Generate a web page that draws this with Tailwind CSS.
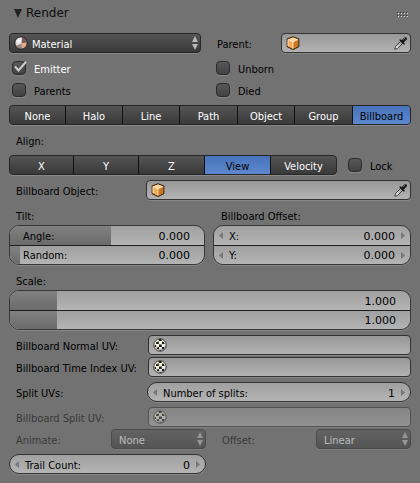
<!DOCTYPE html>
<html lang="en">
<head>
<meta charset="utf-8">
<meta name="viewport" content="width=device-width, initial-scale=1">
<title>Render</title>
<script src="https://cdn.jsdelivr.net/npm/@tailwindcss/browser@4"></script>
</head>
<body class="min-h-screen bg-[#727272] text-black text-[11px] leading-5 font-['DejaVu_Sans_Condensed','DejaVu_Sans',sans-serif]">
<svg class="block h-0 w-0" aria-hidden="true">
  <defs>
    <radialGradient id="ball" cx="35%" cy="30%" r="75%"><stop offset="0" stop-color="#fff"/><stop offset=".55" stop-color="#d0d0d0"/><stop offset="1" stop-color="#777"/></radialGradient>
    <linearGradient id="glass" x1="0" y1="1" x2="1" y2="0"><stop offset="0" stop-color="#fff"/><stop offset="1" stop-color="#888"/></linearGradient>
    <linearGradient id="ivory" x1="0" y1="0" x2="1" y2="1"><stop offset="0" stop-color="#fffbd0"/><stop offset=".6" stop-color="#f4f1e0"/><stop offset="1" stop-color="#a9c4f5"/></linearGradient>
  </defs>
  <symbol id="cube" viewBox="0 0 14 14">
    <path d="M7 .8 12.8 3v7.6L7 13.4 1.2 10.6V3Z" fill="#f0a14c" stroke="#3a2208" stroke-width="1.1" stroke-linejoin="round"/>
    <path d="M7 1.5 12 3.4 7 5.8 2 3.4Z" fill="#ffd9a4"/>
    <path d="M7 5.8 12.1 3.5v6.7L7 12.7Z" fill="#c87820"/>
    <path d="M1.9 3.5 7 5.8v6.9l-5.1-2.5Z" fill="#f5aa58"/>
    <path d="M2 10V3.6L7 5.8l5-2.3M7 5.8v6.6" fill="none" stroke="#ffe9cc" stroke-width=".9"/>
  </symbol>
  <symbol id="dropper" viewBox="0 0 14 14">
    <path d="M.8 13.2 1.6 10.4 7 5l2 2-5.4 5.4Z" fill="url(#glass)" stroke="#1c1c1c" stroke-width=".8" stroke-linejoin="round"/>
    <path d="M6.2 4 10 7.8" stroke="#111" stroke-width="1.6" stroke-linecap="round"/>
    <path d="M8.6 5.4 11.4 2.6" stroke="#1a1a1a" stroke-width="3.2" stroke-linecap="round"/>
    <path d="M9.6 3.2 11 1.9" stroke="#888" stroke-width="1" stroke-linecap="round"/>
  </symbol>
  <symbol id="uv" viewBox="0 0 14 14">
    <circle cx="7" cy="7" r="6.2" fill="url(#ivory)"/>
    <path d="M5.8 1h2.6l.4 2H5.8ZM3.2 4l2.6-.6.1 2.7H3ZM9 3.6l2 .4.6 2H9ZM6 6.4h2.8V9H6ZM1.6 7h1.4l.2 2H2ZM3.4 9.4 6 9l.2 2.4-2-.2ZM9 9h2.6l-1 2.2-1.8.2ZM6.4 11.8h2l-.4 1H6.6Z" fill="#1c1c1c"/>
    <circle cx="7" cy="7" r="6.2" fill="none" stroke="#222" stroke-width=".9"/>
  </symbol>
  <symbol id="updown" viewBox="0 0 6 14">
    <path d="M3 0 6 6H0ZM0 8h6L3 14Z" fill="#b8b8b8"/>
  </symbol>
</svg>

<main class="px-[9px] pb-[9px]">
  <header class="flex h-[33px] items-start justify-between pt-[3px] pl-[5px] pr-[3px]">
    <button type="button" aria-expanded="true" class="flex items-center gap-1 text-xs leading-5 text-[#0c0c0c]">
      <svg class="h-[9px] w-2" viewBox="0 0 8 9" aria-hidden="true"><path d="M0 0h8L4 9Z" fill="#222"/></svg>
      <h2 class="font-['DejaVu_Sans',sans-serif]">Render</h2>
    </button>
    <svg class="mt-[9px] h-[5px] w-[11px]" viewBox="0 0 11 5" shape-rendering="crispEdges" aria-hidden="true">
      <path d="M1 1h1v1H1zM4 1h1v1H4zM7 1h1v1H7zM10 1h1v1h-1zM1 4h1v1H1zM4 4h1v1H4zM7 4h1v1H7zM10 4h1v1h-1z" fill="#dcdcdc"/>
      <path d="M0 0h1v1H0zM3 0h1v1H3zM6 0h1v1H6zM9 0h1v1H9zM0 3h1v1H0zM3 3h1v1H3zM6 3h1v1H6zM9 3h1v1H9z" fill="#333"/>
    </svg>
  </header>

  <form class="flex flex-col gap-[5px]">
    <div class="grid grid-cols-[192fr_80fr_130fr]">
      <div class="relative">
        <select aria-label="Render as material" class="block h-5 w-full appearance-none rounded border border-[#262626] bg-linear-to-b from-[#555] to-[#393939] pt-px pl-[22px] text-white shadow-[0_1px_0_#888]"><option>Material</option></select>
        <svg class="pointer-events-none absolute top-[3px] left-[5px] size-3.5" viewBox="0 0 14 14" aria-hidden="true">
          <circle cx="7" cy="7" r="6" fill="url(#ball)"/>
          <path d="M8 1a6 6 0 0 1 5 5.5L7.5 7.5Z" fill="#77605c"/>
          <path d="M7.5 7.5 13 6.5a6 6 0 0 1-5 6.5Z" fill="#eba888"/>
          <path d="M7.5 7.5 8 13a6 6 0 0 1-6.2-3Z" fill="#9a8884"/>
          <circle cx="7" cy="7" r="6.2" fill="none" stroke="#1a1a1a" stroke-width=".8"/>
        </svg>
        <svg class="pointer-events-none absolute top-[3px] right-[3px] h-3.5 w-1.5" aria-hidden="true"><use href="#updown"/></svg>
      </div>
      <label for="parent" class="h-5 pt-0.5 pl-4">Parent:</label>
      <div class="flex h-5 items-center rounded border border-[#333] bg-linear-to-b from-[#989898] to-[#b3b3b3] pl-1 pr-0.5 shadow-[0_1px_0_#888]">
        <svg class="size-3.5 shrink-0" aria-hidden="true"><use href="#cube"/></svg>
        <input id="parent" type="text" class="h-full w-0 min-w-0 grow bg-transparent px-1 outline-none">
        <button type="button" aria-label="Pick parent"><svg class="size-3.5" aria-hidden="true"><use href="#dropper"/></svg></button>
      </div>
    </div>

    <div class="grid grid-cols-[196fr_198fr] gap-x-2 gap-y-0.5">
      <label class="flex h-5 items-center gap-2 pl-[3px] text-white"><span class="relative flex"><input type="checkbox" checked class="size-3.5 appearance-none rounded border border-[#2c2c2c] bg-linear-to-b from-[#585858] to-[#424242] shadow-[0_1px_0_#888]"><svg class="pointer-events-none absolute top-0 left-[2px] h-3 w-[13px]" viewBox="0 0 13 12" aria-hidden="true"><path d="M1 5.5 4.5 9.5 12 .8" fill="none" stroke="#d0d0d0" stroke-width="2"/></svg></span><span class="pt-1">Emitter</span></label>
      <label class="flex h-5 items-center gap-2 pl-[3px]"><input type="checkbox" class="size-3.5 appearance-none rounded border border-[#2c2c2c] bg-linear-to-b from-[#585858] to-[#424242] shadow-[0_1px_0_#888]"><span class="pt-1">Unborn</span></label>
      <label class="flex h-5 items-center gap-2 pl-[3px]"><input type="checkbox" class="size-3.5 appearance-none rounded border border-[#2c2c2c] bg-linear-to-b from-[#585858] to-[#424242] shadow-[0_1px_0_#888]"><span class="pt-1">Parents</span></label>
      <label class="flex h-5 items-center gap-2 pl-[3px]"><input type="checkbox" class="size-3.5 appearance-none rounded border border-[#2c2c2c] bg-linear-to-b from-[#585858] to-[#424242] shadow-[0_1px_0_#888]"><span class="pt-1">Died</span></label>
    </div>

    <div role="group" aria-label="Render type" class="grid h-5 grid-cols-[56fr_57fr_57fr_58fr_57fr_58fr_57fr] divide-x divide-[#111] overflow-hidden rounded border border-[#262626] bg-linear-to-b from-[#555] to-[#393939] leading-[22px] text-white shadow-[0_1px_0_#888]">
      <button type="button">None</button>
      <button type="button">Halo</button>
      <button type="button">Line</button>
      <button type="button">Path</button>
      <button type="button">Object</button>
      <button type="button">Group</button>
      <button type="button" aria-pressed="true" class="bg-linear-to-b from-[#4873ba] to-[#628cd2] text-black">Billboard</button>
    </div>

    <p class="h-5 pt-0.5 pl-[7px]">Align:</p>

    <div class="grid grid-cols-[328fr_74fr]">
      <div role="group" aria-label="Align" class="grid h-5 grid-cols-[64fr_65fr_66fr_66fr_65fr] divide-x divide-[#111] overflow-hidden rounded border border-[#262626] bg-linear-to-b from-[#555] to-[#393939] leading-[22px] text-white shadow-[0_1px_0_#888]">
        <button type="button">X</button>
        <button type="button">Y</button>
        <button type="button">Z</button>
        <button type="button" aria-pressed="true" class="bg-linear-to-b from-[#4873ba] to-[#628cd2] text-black">View</button>
        <button type="button">Velocity</button>
      </div>
      <label class="flex h-5 items-center gap-2 pl-[11px]"><input type="checkbox" class="size-3.5 appearance-none rounded border border-[#2c2c2c] bg-linear-to-b from-[#585858] to-[#424242] shadow-[0_1px_0_#888]"><span class="pt-1">Lock</span></label>
    </div>

    <div class="grid grid-cols-[137fr_265fr]">
      <label for="bobject" class="h-5 pt-0.5 pl-[7px]">Billboard Object:</label>
      <div class="flex h-5 items-center rounded border border-[#333] bg-linear-to-b from-[#989898] to-[#b3b3b3] pl-1 pr-0.5 shadow-[0_1px_0_#888]">
        <svg class="size-3.5 shrink-0" aria-hidden="true"><use href="#cube"/></svg>
        <input id="bobject" type="text" class="h-full w-0 min-w-0 grow bg-transparent px-1 outline-none">
        <button type="button" aria-label="Pick billboard object"><svg class="size-3.5" aria-hidden="true"><use href="#dropper"/></svg></button>
      </div>
    </div>

    <div class="grid grid-cols-[196fr_198fr] gap-x-2">
      <section>
        <h3 class="h-5 pt-0.5 pl-[7px]">Tilt:</h3>
        <div class="divide-y divide-[#1e1e1e] overflow-hidden rounded-[10px] border border-[#383838] shadow-[0_1px_0_#888]">
          <div class="relative flex h-5 items-center bg-linear-to-b from-[#a0a0a0] to-[#b4b4b4] pl-[13px] pr-3.5">
            <div class="absolute inset-y-0 left-0 bg-linear-to-b from-[#818181] to-[#6b6b6b]" style="width:52%"></div>
            <label for="angle" class="relative pt-0.5">Angle:</label>
            <input id="angle" type="text" value="0.000" class="relative w-0 min-w-0 grow bg-transparent pt-0.5 text-right font-['DejaVu_Sans',sans-serif] outline-none">
          </div>
          <div class="relative flex h-[18px] items-center bg-linear-to-b from-[#a0a0a0] to-[#b4b4b4] pl-[13px] pr-3.5">
            <div class="absolute inset-y-0 left-0 bg-linear-to-b from-[#818181] to-[#6b6b6b]" style="width:5%"></div>
            <label for="random" class="relative pt-0.5">Random:</label>
            <input id="random" type="text" value="0.000" class="relative w-0 min-w-0 grow bg-transparent pt-0.5 text-right font-['DejaVu_Sans',sans-serif] outline-none">
          </div>
        </div>
      </section>
      <section>
        <h3 class="h-5 pt-0.5 pl-2">Billboard Offset:</h3>
        <div class="divide-y divide-[#1e1e1e] overflow-hidden rounded-[10px] border border-[#383838] shadow-[0_1px_0_#888]">
          <div class="flex h-5 items-center bg-linear-to-b from-[#a0a0a0] to-[#b4b4b4] px-[5px]">
            <button type="button" aria-label="Decrease X"><svg class="h-[7px] w-1" viewBox="0 0 4 7"><path d="M4 0v7L0 3.5Z" fill="#777"/></svg></button>
            <label for="ox" class="pt-0.5 pl-1.5">X:</label>
            <input id="ox" type="text" value="0.000" class="w-0 min-w-0 grow bg-transparent pt-0.5 pr-1.5 text-right font-['DejaVu_Sans',sans-serif] outline-none">
            <button type="button" aria-label="Increase X"><svg class="h-[7px] w-1" viewBox="0 0 4 7"><path d="M0 0v7L4 3.5Z" fill="#777"/></svg></button>
          </div>
          <div class="flex h-[18px] items-center bg-linear-to-b from-[#a0a0a0] to-[#b4b4b4] px-[5px]">
            <button type="button" aria-label="Decrease Y"><svg class="h-[7px] w-1" viewBox="0 0 4 7"><path d="M4 0v7L0 3.5Z" fill="#777"/></svg></button>
            <label for="oy" class="pt-0.5 pl-1.5">Y:</label>
            <input id="oy" type="text" value="0.000" class="w-0 min-w-0 grow bg-transparent pt-0.5 pr-1.5 text-right font-['DejaVu_Sans',sans-serif] outline-none">
            <button type="button" aria-label="Increase Y"><svg class="h-[7px] w-1" viewBox="0 0 4 7"><path d="M0 0v7L4 3.5Z" fill="#777"/></svg></button>
          </div>
        </div>
      </section>
    </div>

    <section>
      <h3 class="h-5 pt-0.5 pl-[7px]">Scale:</h3>
      <div class="divide-y divide-[#1e1e1e] overflow-hidden rounded-[10px] border border-[#383838] shadow-[0_1px_0_#888]">
        <div class="relative flex h-5 items-center bg-linear-to-b from-[#a0a0a0] to-[#b4b4b4] pr-3.5">
          <div class="absolute inset-y-0 left-0 bg-linear-to-b from-[#818181] to-[#6b6b6b]" style="width:11.8%"></div>
          <input aria-label="Scale X" type="text" value="1.000" class="relative w-0 min-w-0 grow bg-transparent pt-0.5 text-right font-['DejaVu_Sans',sans-serif] outline-none">
        </div>
        <div class="relative flex h-[18px] items-center bg-linear-to-b from-[#a0a0a0] to-[#b4b4b4] pr-3.5">
          <div class="absolute inset-y-0 left-0 bg-linear-to-b from-[#818181] to-[#6b6b6b]" style="width:11.8%"></div>
          <input aria-label="Scale Y" type="text" value="1.000" class="relative w-0 min-w-0 grow bg-transparent pt-0.5 text-right font-['DejaVu_Sans',sans-serif] outline-none">
        </div>
      </div>
    </section>

    <div class="grid grid-cols-[139fr_263fr] gap-y-0.5">
      <label for="nuv" class="h-5 pt-0.5 pl-[7px]">Billboard Normal UV:</label>
      <div class="flex h-5 items-center rounded border border-[#333] bg-linear-to-b from-[#989898] to-[#b3b3b3] pl-1 shadow-[0_1px_0_#888]">
        <svg class="size-3.5 shrink-0" aria-hidden="true"><use href="#uv"/></svg>
        <input id="nuv" type="text" class="h-full w-0 min-w-0 grow bg-transparent px-1 outline-none">
      </div>
      <label for="tuv" class="h-5 pt-0.5 pl-[7px]">Billboard Time Index UV:</label>
      <div class="flex h-5 items-center rounded border border-[#333] bg-linear-to-b from-[#989898] to-[#b3b3b3] pl-1 shadow-[0_1px_0_#888]">
        <svg class="size-3.5 shrink-0" aria-hidden="true"><use href="#uv"/></svg>
        <input id="tuv" type="text" class="h-full w-0 min-w-0 grow bg-transparent px-1 outline-none">
      </div>
    </div>

    <div class="grid grid-cols-[138fr_264fr]">
      <p class="h-5 pt-0.5 pl-[7px]">Split UVs:</p>
      <div class="flex h-5 items-center rounded-full border border-[#333] bg-linear-to-b from-[#a0a0a0] to-[#b4b4b4] px-[5px] shadow-[0_1px_0_#888]">
        <button type="button" aria-label="Fewer splits"><svg class="h-[7px] w-1" viewBox="0 0 4 7"><path d="M4 0v7L0 3.5Z" fill="#777"/></svg></button>
        <label for="splits" class="pt-1 pl-1.5">Number of splits:</label>
        <input id="splits" type="text" value="1" class="w-0 min-w-0 grow bg-transparent pt-1 pr-1.5 text-right font-['DejaVu_Sans',sans-serif] outline-none">
        <button type="button" aria-label="More splits"><svg class="h-[7px] w-1" viewBox="0 0 4 7"><path d="M0 0v7L4 3.5Z" fill="#777"/></svg></button>
      </div>
    </div>

    <div class="flex flex-col gap-0.5 opacity-50">
      <div class="grid grid-cols-[139fr_263fr]">
        <label for="suv" class="h-5 pt-0.5 pl-[7px]">Billboard Split UV:</label>
        <div class="flex h-5 items-center rounded border border-[#333] bg-linear-to-b from-[#989898] to-[#b3b3b3] pl-1 shadow-[0_1px_0_#888]">
          <svg class="size-3.5 shrink-0" aria-hidden="true"><use href="#uv"/></svg>
          <input id="suv" type="text" disabled class="h-full w-0 min-w-0 grow bg-transparent px-1 outline-none">
        </div>
      </div>
      <div class="grid grid-cols-[102fr_95fr_110fr_95fr]">
        <label for="animate" class="h-5 pt-0.5 pl-[7px]">Animate:</label>
        <div class="relative">
          <select id="animate" disabled class="block h-5 w-full appearance-none rounded border border-[#262626] bg-linear-to-b from-[#555] to-[#393939] pt-px pl-[7px] text-white opacity-100 shadow-[0_1px_0_#888]"><option>None</option></select>
          <svg class="pointer-events-none absolute top-[3px] right-[3px] h-3.5 w-1.5" aria-hidden="true"><use href="#updown"/></svg>
        </div>
        <label for="offset" class="h-5 pt-0.5 pl-4">Offset:</label>
        <div class="relative">
          <select id="offset" disabled class="block h-5 w-full appearance-none rounded border border-[#262626] bg-linear-to-b from-[#555] to-[#393939] pt-px pl-[7px] text-white opacity-100 shadow-[0_1px_0_#888]"><option>Linear</option></select>
          <svg class="pointer-events-none absolute top-[3px] right-[3px] h-3.5 w-1.5" aria-hidden="true"><use href="#updown"/></svg>
        </div>
      </div>
    </div>

    <div class="grid grid-cols-[197fr_205fr]">
      <div class="flex h-5 items-center rounded-full border border-[#333] bg-linear-to-b from-[#a0a0a0] to-[#b4b4b4] px-[5px] shadow-[0_1px_0_#888]">
        <button type="button" aria-label="Shorter trail"><svg class="h-[7px] w-1" viewBox="0 0 4 7"><path d="M4 0v7L0 3.5Z" fill="#777"/></svg></button>
        <label for="trail" class="pt-1 pl-1.5">Trail Count:</label>
        <input id="trail" type="text" value="0" class="w-0 min-w-0 grow bg-transparent pt-1 pr-1.5 text-right font-['DejaVu_Sans',sans-serif] outline-none">
        <button type="button" aria-label="Longer trail"><svg class="h-[7px] w-1" viewBox="0 0 4 7"><path d="M0 0v7L4 3.5Z" fill="#777"/></svg></button>
      </div>
    </div>
  </form>
</main>
</body>
</html>
